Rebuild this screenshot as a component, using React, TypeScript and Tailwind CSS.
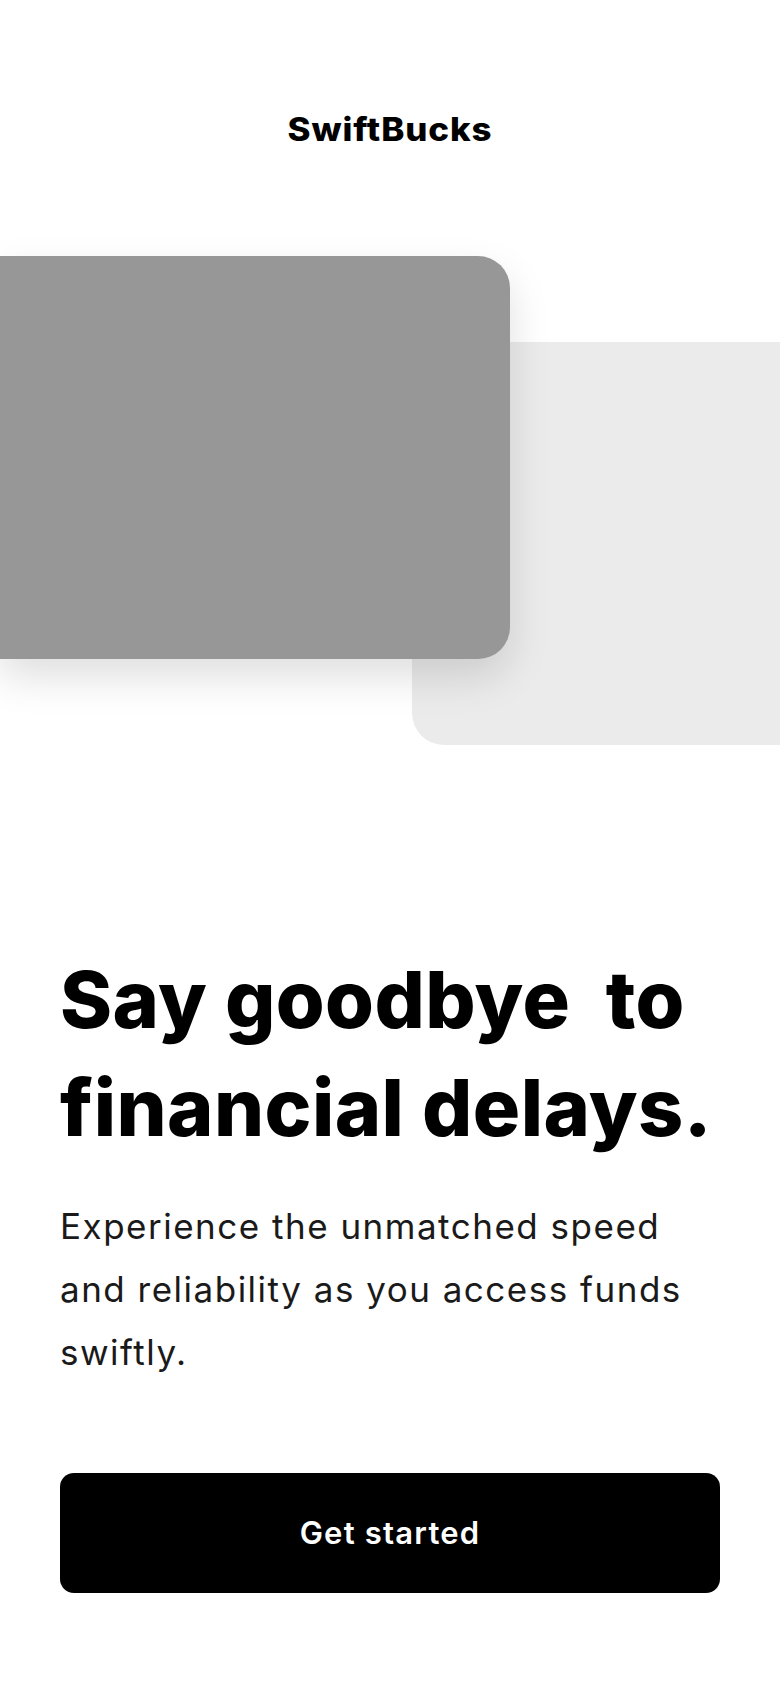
export default function App() {
  return (
    <div className="min-h-screen overflow-hidden bg-white font-['Inter',sans-serif] text-black">
      <header className="flex h-[150px] items-end justify-center">
        <span className="inline-block origin-center scale-x-[1.09] text-[32px] font-extrabold leading-[40px] tracking-[0.8px]">
          SwiftBucks
        </span>
      </header>

      {/* card stack */}
      <div className="relative mt-[106px] h-[490px]">
        <div className="absolute left-[412px] right-0 top-[86px] h-[403px] rounded-l-[32px] bg-[#ebebeb]" />
        <div className="relative h-[403px] w-[510px] rounded-r-[32px] bg-[#979797] shadow-[0_18px_40px_rgba(0,0,0,0.13)]" />
      </div>

      <main className="px-[60px]">
        <h1 className="mt-[199px] text-[79px] font-extrabold leading-[108px] tracking-[0.4px]">
          Say goodbye{'\u00a0'} to
          <br />
          financial delays.
        </h1>
        <p className="mt-[34px] text-[35px] leading-[63px] tracking-[1.5px] text-[#1a1a1a]">
          Experience the unmatched speed and reliability as you access funds swiftly.
        </p>
        <button className="mt-[89px] flex h-[120px] w-full items-center justify-center rounded-[14px] bg-black text-[31px] font-semibold tracking-[1.2px] text-white">
          Get started
        </button>
      </main>
    </div>
  );
}
